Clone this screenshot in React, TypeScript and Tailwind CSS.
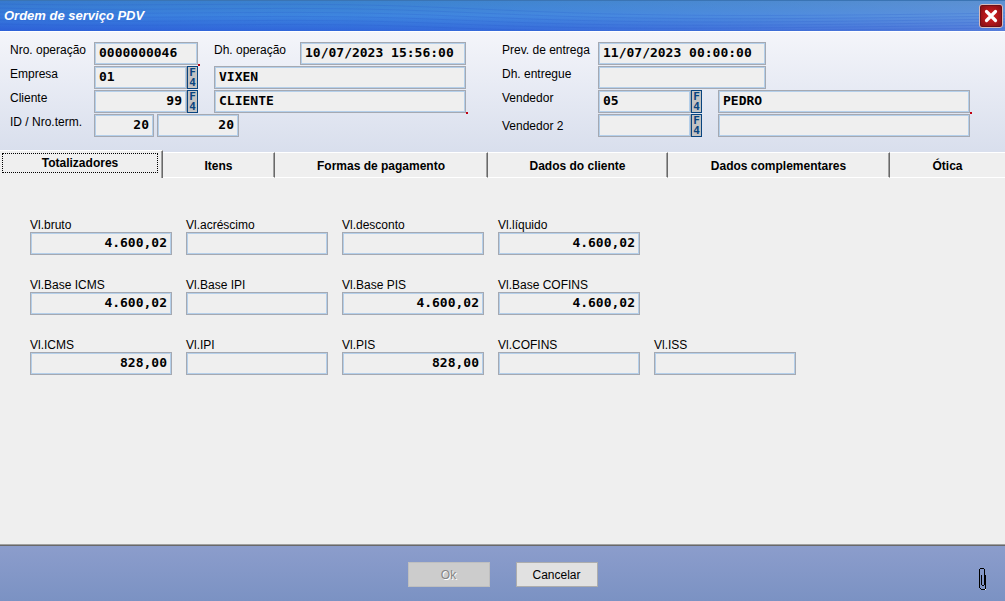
import { clsx } from 'clsx';
import { useId, useState } from 'react';

const tabs = ['Totalizadores', 'Itens', 'Formas de pagamento', 'Dados do cliente', 'Dados complementares', 'Ótica'];

const totals = [
  [
    { label: 'Vl.bruto', value: '4.600,02' },
    { label: 'Vl.acréscimo', value: '' },
    { label: 'Vl.desconto', value: '' },
    { label: 'Vl.líquido', value: '4.600,02' },
  ],
  [
    { label: 'Vl.Base ICMS', value: '4.600,02' },
    { label: 'Vl.Base IPI', value: '' },
    { label: 'Vl.Base PIS', value: '4.600,02' },
    { label: 'Vl.Base COFINS', value: '4.600,02' },
  ],
  [
    { label: 'Vl.ICMS', value: '828,00' },
    { label: 'Vl.IPI', value: '' },
    { label: 'Vl.PIS', value: '828,00' },
    { label: 'Vl.COFINS', value: '' },
    { label: 'Vl.ISS', value: '' },
  ],
];

interface TextFieldProps {
  id?: string;
  value?: string;
  label?: string;
  right?: boolean;
  className?: string;
}

const TextField: React.FC<TextFieldProps> = ({ id, value = '', label, right, className }) => (
  <input
    id={id}
    aria-label={label}
    defaultValue={value}
    readOnly
    className={clsx(
      'h-[23px] min-w-0 border border-[#a5a9b2] bg-[#efefef] px-1 pb-0.5 font-["DejaVu_Sans_Mono",monospace] text-[13px] font-bold text-black shadow-[inset_0_0_0_1px_#b4cfea] outline-none',
      right && 'text-right',
      className,
    )}
  />
);

const LookupButton: React.FC<{ label: string }> = ({ label }) => (
  <button
    type="button"
    aria-label={label}
    className="h-[23px] w-[11px] shrink-0 border border-[#08447f] bg-[#c3c3c3] text-center font-['DejaVu_Sans_Mono',monospace] text-[11px] leading-[10px] font-bold break-all text-[#08447f]"
  >
    F4
  </button>
);

const RequiredMark = () => <span className="absolute -right-0.5 -bottom-px size-0.5 bg-[#c00010]" />;

const TitleBar = () => (
  <header className="relative flex h-[31px] items-center justify-between bg-linear-to-b from-[#3c83c9] via-[#3f86df] to-[#2f5fd8] pr-0.5 pl-1">
    <svg className="absolute inset-0 size-full" viewBox="0 0 1005 31" preserveAspectRatio="none" aria-hidden="true">
      <defs>
        <linearGradient id="shine" x1="0" x2="1" y1="0" y2="0">
          <stop offset="0" stopColor="#2a62d6" stopOpacity="0.3" />
          <stop offset="0.35" stopColor="#3a82e0" stopOpacity="0.2" />
          <stop offset="1" stopColor="#8fa6dc" stopOpacity="0.4" />
        </linearGradient>
      </defs>
      <rect width="1005" height="31" fill="url(#shine)" />
      <g fill="none" stroke="#2457c9" strokeOpacity="0.2">
        <path d="M0 4C160 7 280 1 430 7S640 19 1005 13" />
        <path d="M0 8C160 12 280 5 430 11S640 22 1005 16" />
        <path d="M0 12C160 16 280 9 430 15S640 25 1005 19" />
        <path d="M0 16C160 20 280 13 430 19S640 28 1005 22" />
        <path d="M0 20C160 24 280 17 430 23S640 30 1005 25" />
        <path d="M0 24C160 28 280 21 430 27S640 32 1005 28" />
      </g>
      <path d="M0 0.5H1005" stroke="#3a74b4" />
    </svg>
    <h1 className="relative text-[13px] leading-4 font-bold text-white italic">Ordem de serviço PDV</h1>
    <button
      type="button"
      aria-label="Fechar"
      className="relative flex size-6 items-center justify-center rounded-[3px] border border-[#d9b9b9] bg-radial from-[#e02020] to-[#7c0d14] shadow-[inset_0_0_0_1px_#6e0f18]"
    >
      <svg viewBox="0 0 14 14" className="size-3.5" fill="none" stroke="#fff" strokeWidth="3.2" strokeLinecap="round">
        <path d="M2.5 2.5l9 9M11.5 2.5l-9 9" />
      </svg>
    </button>
  </header>
);

const OrderHeader = () => (
  <section className="grid grid-cols-[minmax(0,456fr)_minmax(0,468fr)] gap-9 border-t border-white bg-linear-to-b from-[#f4f5fa] to-[#d9dfed] pt-2.5 pr-[35px] pb-[13px] pl-2.5 leading-4">
    <div className="flex flex-col gap-px">
      <div className="flex items-start">
        <label htmlFor="operacao" className="w-[84px] shrink-0">Nro. operação</label>
        <div className="relative flex w-[104px] shrink-0">
          <TextField id="operacao" value="0000000046" className="w-full" />
          <RequiredMark />
        </div>
        <label htmlFor="dh-operacao" className="ml-4 w-[86px] shrink-0">Dh. operação</label>
        <TextField id="dh-operacao" value="10/07/2023 15:56:00" className="flex-1" />
      </div>
      <div className="flex items-start">
        <label htmlFor="empresa" className="w-[84px]">Empresa</label>
        <TextField id="empresa" value="01" className="w-[93px]" />
        <LookupButton label="Pesquisar empresa" />
        <TextField label="Nome da empresa" value="VIXEN" className="ml-4 flex-1" />
      </div>
      <div className="flex items-start">
        <label htmlFor="cliente" className="w-[84px]">Cliente</label>
        <TextField id="cliente" value="99" right className="w-[93px]" />
        <LookupButton label="Pesquisar cliente" />
        <div className="relative ml-4 flex flex-1">
          <TextField label="Nome do cliente" value="CLIENTE" className="w-full" />
          <RequiredMark />
        </div>
      </div>
      <div className="flex items-start">
        <label htmlFor="terminal" className="w-[84px]">ID / Nro.term.</label>
        <TextField id="terminal" value="20" right className="w-[60px]" />
        <TextField label="Número do terminal" value="20" right className="ml-[3px] w-[82px]" />
      </div>
    </div>
    <div className="flex flex-col gap-px">
      <div className="flex items-start">
        <label htmlFor="previsao" className="w-24">Prev. de entrega</label>
        <TextField id="previsao" value="11/07/2023 00:00:00" className="w-[168px]" />
      </div>
      <div className="flex items-start">
        <label htmlFor="entregue" className="w-24">Dh. entregue</label>
        <TextField id="entregue" className="w-[168px]" />
      </div>
      <div className="flex items-start">
        <label htmlFor="vendedor" className="w-24">Vendedor</label>
        <TextField id="vendedor" value="05" className="w-[93px]" />
        <LookupButton label="Pesquisar vendedor" />
        <div className="relative ml-4 flex flex-1">
          <TextField label="Nome do vendedor" value="PEDRO" className="w-full" />
          <RequiredMark />
        </div>
      </div>
      <div className="flex items-center">
        <label htmlFor="vendedor2" className="w-24">Vendedor 2</label>
        <TextField id="vendedor2" className="w-[93px]" />
        <LookupButton label="Pesquisar vendedor 2" />
        <TextField label="Nome do vendedor 2" className="ml-4 flex-1" />
      </div>
    </div>
  </section>
);

const TabBar: React.FC<{ active: number; onChange: (index: number) => void }> = ({ active, onChange }) => (
  <div role="tablist" className="grid grid-cols-[163fr_112fr_213fr_180fr_222fr_115fr] items-end bg-[#d9dfed]">
    {tabs.map((tab, i) => (
      <button
        key={tab}
        type="button"
        role="tab"
        aria-selected={i === active}
        onClick={() => onChange(i)}
        className={clsx(
          'border-t border-white bg-[#efefef] font-bold whitespace-nowrap outline-none',
          i < tabs.length - 1 && 'border-r border-r-[#696969] shadow-[inset_-1px_0_0_#a0a0a0]',
          i === active ? 'h-7 pt-0.5 pr-1 pb-[5px] pl-0.5' : 'h-[26px] border-b border-b-white pt-0.5',
        )}
      >
        {i === active ? (
          <span className="flex h-full items-center justify-center border border-dotted border-black">{tab}</span>
        ) : (
          tab
        )}
      </button>
    ))}
  </div>
);

const TotalField: React.FC<{ label: string; value: string }> = ({ label, value }) => {
  const id = useId();
  return (
    <div className="flex flex-col">
      <label htmlFor={id} className="leading-[14px]">{label}</label>
      <TextField id={id} value={value} right />
    </div>
  );
};

const Footer = () => (
  <footer className="grid grid-cols-[1fr_auto_1fr] border-t border-[#a0a0a0] bg-linear-to-b from-[#8c9dcc] to-[#7b92c3]">
    <div className="col-span-3 h-px bg-[#696969]" />
    <div className="col-start-2 flex gap-[26px] pt-4 pb-3.5">
      <button
        type="button"
        disabled
        className="h-[25px] w-[82px] border border-[#bfbfbf] bg-[#cccccc] text-[#858585] text-shadow-[1px_1px_0_#fff]"
      >
        Ok
      </button>
      <button type="button" className="h-[25px] w-[82px] border border-[#adadad] bg-[#e1e1e1]">
        Cancelar
      </button>
    </div>
    <button type="button" aria-label="Anexos" className="mr-[18px] mb-[11px] self-end justify-self-end">
      <svg width="8" height="22" viewBox="0 0 8 22" fill="none" shapeRendering="crispEdges">
        <path d="M1 .5H5M.5 1V20M5.5 1V17M6.5 7V21M2.5 7V17M3 17.5H5M1 20.5H2M2 21.5H6" stroke="#000" />
        <path d="M6 21.5H7" stroke="#fff" />
      </svg>
    </button>
  </footer>
);

export default function App() {
  const [active, setActive] = useState(0);

  return (
    <main className="flex min-h-screen flex-col bg-[#efefef] font-['Liberation_Sans',Arial,sans-serif] text-[12px] text-black">
      <TitleBar />
      <OrderHeader />
      <TabBar active={active} onChange={setActive} />
      <div role="tabpanel" className="flex flex-1 flex-col gap-[23px] px-[30px] pt-10">
        {active === 0 &&
          totals.map((row) => (
            <div key={row[0].label} className="grid grid-cols-[repeat(5,142px)] gap-3.5">
              {row.map((field) => (
                <TotalField key={field.label} {...field} />
              ))}
            </div>
          ))}
      </div>
      <Footer />
    </main>
  );
}
